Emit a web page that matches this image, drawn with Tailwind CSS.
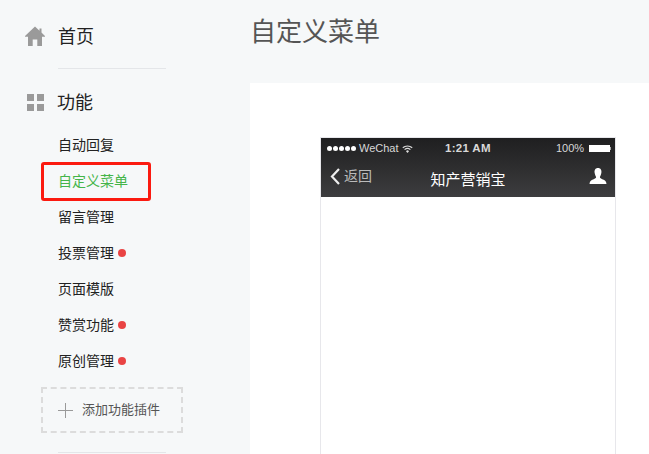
<!DOCTYPE html>
<html lang="zh-CN">
<head>
    <meta charset="UTF-8">
    <title>自定义菜单</title>
    <script src="https://cdn.jsdelivr.net/npm/@tailwindcss/browser@4"></script>
</head>
<body class="bg-[#f6f8f9] font-['Liberation_Sans','Noto_Sans_CJK_SC',sans-serif] text-[#353535] overflow-hidden">
    <div class="flex h-[454px] w-[649px] overflow-hidden">
        <!-- sidebar -->
        <div class="w-[250px] shrink-0 pt-[19px]">
            <div class="flex items-center h-[35px] pl-[25px] pt-[1px]">
                <svg class="w-[20px] h-[20px] mr-[13px] -mt-[2px]" viewBox="0 0 20 20" fill="#9a9a9a"><path d="M10 0.500 L14.500 4.700 L14.500 2.500 L16.500 2.500 L16.500 6.600 L20 10 L20 10.800 L17 10.800 L17 20 L12.300 20 L12.300 13.500 L7.700 13.500 L7.700 20 L3 20 L3 10.800 L0 10.800 L0 10 Z"/></svg>
                <span class="text-[18px] text-[#222]">首页</span>
            </div>
            <div class="ml-[58px] mt-[14px] w-[108px] h-px bg-[#e4e6e9]"></div>
            <div class="flex items-center h-[35px] pl-[27px] mt-[16px] pt-[1px]">
                <div class="grid grid-cols-2 gap-[3px] mr-[13px] -mt-[1px]">
                    <div class="w-[7px] h-[7px] bg-[#9a9a9a]"></div>
                    <div class="w-[7px] h-[7px] bg-[#9a9a9a]"></div>
                    <div class="w-[7px] h-[7px] bg-[#9a9a9a]"></div>
                    <div class="w-[7px] h-[7px] bg-[#9a9a9a]"></div>
                </div>
                <span class="text-[18px] text-[#222]">功能</span>
            </div>
            <ul class="mt-[7px] text-[14px] leading-[36px] pl-[58px] text-[#222]">
                <li class="h-[36px]">自动回复</li>
                <li class="h-[36px] text-[#44b549] relative">自定义菜单
                    <div class="absolute left-[-17px] top-[-1px] w-[110px] h-[39px] border-[3px] border-[#fb1a10] rounded-[3px]"></div>
                </li>
                <li class="h-[36px]">留言管理</li>
                <li class="h-[36px] flex items-center">投票管理<span class="ml-[4px] w-[8px] h-[8px] rounded-full bg-[#e94444]"></span></li>
                <li class="h-[36px]">页面模版</li>
                <li class="h-[36px] flex items-center">赞赏功能<span class="ml-[4px] w-[8px] h-[8px] rounded-full bg-[#e94444]"></span></li>
                <li class="h-[36px] flex items-center">原创管理<span class="ml-[4px] w-[8px] h-[8px] rounded-full bg-[#e94444]"></span></li>
            </ul>
            <div class="ml-[41px] mt-[8px] w-[142px] h-[46px] border-2 border-dashed border-[#dcdcdc] flex items-center pl-[15px] text-[13px] text-[#555]">
                <svg class="w-[15px] h-[15px] mr-[9px]" viewBox="0 0 15 15" stroke="#9a9a9a" fill="none"><path d="M7.5 0 V15 M0 7.5 H15"/></svg>
                添加功能插件
            </div>
            <div class="ml-[58px] mt-[19px] w-[108px] h-px bg-[#e4e6e9]"></div>
        </div>
        <!-- main -->
        <div class="flex-1 flex flex-col">
            <div class="h-[83px] shrink-0 pt-[14px] text-[26px] leading-[36px] text-[#555]">自定义菜单</div>
            <div class="flex-1 bg-white pl-[70px] pt-[54px]">
                <div class="w-[296px] h-[400px] border border-[#e7e7eb]">
                    <div class="h-[59px] bg-gradient-to-b from-[#1f1f20] to-[#3d3d3f] text-white">
                        <div class="relative flex items-center h-[21px] pl-[6px] text-[11px] text-[#d8d8d8]">
                            <div class="flex items-center gap-[1px]">
                                <div class="flex gap-[1px] mr-[2px]">
                                    <span class="w-[5px] h-[5px] rounded-full bg-white"></span>
                                    <span class="w-[5px] h-[5px] rounded-full bg-white"></span>
                                    <span class="w-[5px] h-[5px] rounded-full bg-white"></span>
                                    <span class="w-[5px] h-[5px] rounded-full bg-white"></span>
                                    <span class="w-[5px] h-[5px] rounded-full bg-white"></span>
                                </div>
                                <span class="mr-[2px]">WeChat</span>
                                <svg class="w-[11px] h-[8px]" viewBox="0 0 11 8" fill="none" stroke="#ddd" stroke-width="1.2"><path d="M0.8 2.8 A7 7 0 0 1 10.200 2.800 M2.600 4.600 A4.400 4.400 0 0 1 8.400 4.600"/><path d="M5.500 8 L4 6.200 A2 2 0 0 1 7 6.200 Z" fill="#ddd" stroke="none"/></svg>
                            </div>
                            <span class="absolute left-[124px] font-bold text-[11.5px] tracking-[0.3px]">1:21 AM</span>
                            <div class="absolute left-[235px] flex items-center gap-[5px]">
                                <span>100%</span>
                                <div class="flex items-center">
                                    <div class="w-[21px] h-[7px] bg-white"></div>
                                    <div class="w-px h-[3px] bg-[#aaa]"></div>
                                </div>
                            </div>
                        </div>
                        <div class="relative flex items-center justify-between h-[38px] pl-[9px] pr-[8px]">
                            <div class="flex items-center gap-[4px] text-[14px] text-[#bbb] -mt-[3px]">
                                <svg class="w-[10px] h-[17px]" viewBox="0 0 10 17" fill="none" stroke="#eee" stroke-width="2.2"><path d="M9 1 L2 8.500 L9 16"/></svg>
                                返回
                            </div>
                            <span class="absolute left-0 right-0 top-[3px] text-center text-[15px] text-white leading-[36px]">知产营销宝</span>
                            <svg class="w-[18px] h-[16px] -mt-[5px]" viewBox="0 0 18 17" fill="#fff"><path d="M9 0 C12 0 13 2.500 12.600 5 C12.300 7 11.500 8.500 11 9.500 C11 11 13 11.500 15 12.500 C17 13.500 18 15 18 17 L0 17 C0 15 1 13.500 3 12.500 C5 11.500 7 11 7 9.500 C6.500 8.500 5.700 7 5.400 5 C5 2.500 6 0 9 0 Z"/></svg>
                        </div>
                    </div>
                </div>
            </div>
        </div>
    </div>
</body>
</html>
